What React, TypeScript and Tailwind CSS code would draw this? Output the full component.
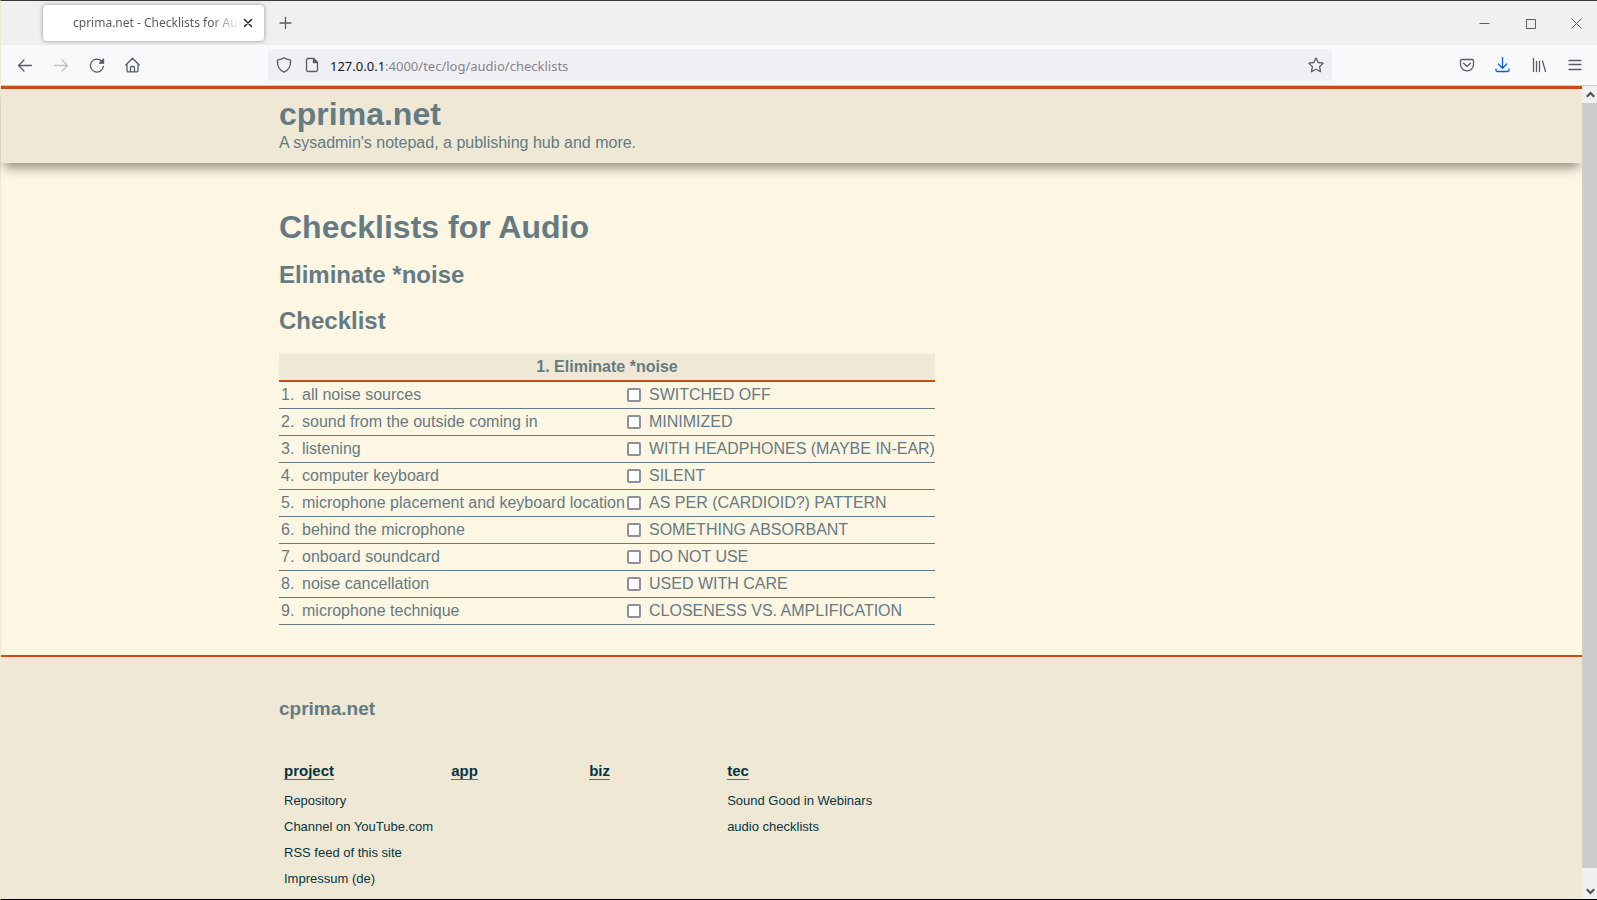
import type { ReactNode } from "react";

const checklist = [
  ["all noise sources", "SWITCHED OFF"],
  ["sound from the outside coming in", "MINIMIZED"],
  ["listening", "WITH HEADPHONES (MAYBE IN-EAR)"],
  ["computer keyboard", "SILENT"],
  ["microphone placement and keyboard location", "AS PER (CARDIOID?) PATTERN"],
  ["behind the microphone", "SOMETHING ABSORBANT"],
  ["onboard soundcard", "DO NOT USE"],
  ["noise cancellation", "USED WITH CARE"],
  ["microphone technique", "CLOSENESS VS. AMPLIFICATION"],
];

const siteMap = [
  {
    title: "project",
    links: ["Repository", "Channel on YouTube.com", "RSS feed of this site", "Impressum (de)"],
  },
  { title: "app", links: [] },
  { title: "biz", links: [] },
  { title: "tec", links: ["Sound Good in Webinars", "audio checklists"] },
];

function Icon({ children, className = "" }: { children: ReactNode; className?: string }) {
  return (
    <svg
      viewBox="0 0 16 16"
      className={`size-4 shrink-0 ${className}`}
      fill="none"
      stroke="currentColor"
      strokeWidth="1.3"
      strokeLinecap="round"
      strokeLinejoin="round"
      aria-hidden="true"
    >
      {children}
    </svg>
  );
}

function ToolButton({ label, children, className = "" }: { label: string; children: ReactNode; className?: string }) {
  return (
    <button
      type="button"
      aria-label={label}
      className={`flex h-8 w-9 shrink-0 items-center justify-center ${className}`}
    >
      {children}
    </button>
  );
}

function WindowButton({ label, children }: { label: string; children: ReactNode }) {
  return (
    <button type="button" aria-label={label} className="flex h-full w-[42px] items-center justify-center text-[#5c5c5c]">
      <svg viewBox="0 0 11 11" className="size-[11px]" fill="none" stroke="currentColor" aria-hidden="true">
        {children}
      </svg>
    </button>
  );
}

function TabStrip() {
  return (
    <div className="flex h-11 items-center bg-[#f0f0f0] pl-[42px] font-['Noto_Sans',sans-serif]">
      <div className="flex h-9 w-[221px] items-center rounded bg-white pr-2 pl-[30px] shadow-[0_0_4px_rgba(0,0,0,0.4)]">
        <span className="min-w-0 flex-1 overflow-hidden text-xs whitespace-nowrap text-[#5b5b66] [mask-image:linear-gradient(to_right,black_84%,transparent)]">
          cprima.net - Checklists for Audio
        </span>
        <button type="button" aria-label="Close tab" className="text-[#15141a]">
          <Icon>
            <path d="M4.500 4.500l7 7M11.500 4.500l-7 7" />
          </Icon>
        </button>
      </div>
      <button type="button" aria-label="New tab" className="ml-[14px] text-[#5b5b66]">
        <Icon>
          <path d="M7.500 2.500v11M2 8h11" />
        </Icon>
      </button>
      <div className="ml-auto flex h-full gap-1">
        <WindowButton label="Minimize">
          <path d="M0.500 5.500h10" />
        </WindowButton>
        <WindowButton label="Maximize">
          <path d="M1.500 1.500h9v9h-9z" />
        </WindowButton>
        <WindowButton label="Close">
          <path d="M0.500 0.500l10 10M10.500 0.500l-10 10" />
        </WindowButton>
      </div>
    </div>
  );
}

function Toolbar() {
  return (
    <div className="flex h-[41px] items-center border-b border-[#cccccc] bg-[#f9f9fb] pr-1 pl-[6px] text-[#5b5b66]">
      <ToolButton label="Back">
        <Icon>
          <path d="M14.500 8.500h-13M7 3L1.500 8.500L7 14" />
        </Icon>
      </ToolButton>
      <ToolButton label="Forward" className="text-[#c0c0c5]">
        <Icon>
          <path d="M1.500 8.500h13M9 3L14.500 8.500L9 14" />
        </Icon>
      </ToolButton>
      <ToolButton label="Reload">
        <Icon>
          <path d="M14.400 9.500A6.500 6.500 0 1 1 12.600 4" />
          <path d="M10.500 6.200h4V2.200z" fill="currentColor" />
        </Icon>
      </ToolButton>
      <ToolButton label="Home">
        <Icon>
          <path d="M0.800 8L7.500 1.200L14.200 8M2 7V13.500a1.300 1.300 0 0 0 1.300 1.300H11.700a1.300 1.300 0 0 0 1.300-1.300V7M5.500 14.500V10.500a1 1 0 0 1 1-1H8.500a1 1 0 0 1 1 1V14.500" />
        </Icon>
      </ToolButton>
      <div className="flex-1" />
      <div className="flex h-8 min-w-0 basis-[1064px] items-center rounded bg-[#f0f0f4] pr-2 pl-2">
        <Icon>
          <path d="M8 0.800C6.500 2 4 2.800 1.400 3.200C1.200 8.500 2.500 12.800 8 15.200C13.500 12.800 14.800 8.500 14.600 3.200C12 2.800 9.500 2 8 0.800z" />
        </Icon>
        <Icon className="ml-3">
          <path d="M9.500 1.500H4A1.500 1.500 0 0 0 2.500 3V13A1.500 1.500 0 0 0 4 14.500H12A1.500 1.500 0 0 0 13.500 13V5.500z" />
          <path d="M9.500 1.500V5.500H13.500z" fill="currentColor" />
        </Icon>
        <a
          href="#top"
          className="ml-[10px] truncate pt-[2px] font-['Noto_Sans',sans-serif] text-[13px]/5 text-[#85858e]"
        >
          <span className="text-[#15141a]">127.0.0.1</span>:4000/tec/log/audio/checklists
        </a>
        <button type="button" aria-label="Bookmark this page" className="ml-auto">
          <Icon>
            <path d="M8 1L10.200 5.500L15.200 6.100L11.600 9.600L12.500 14.700L8 12.300L3.500 14.700L4.400 9.600L0.800 6.100L5.800 5.500z" />
          </Icon>
        </button>
      </div>
      <div className="flex-1" />
      <ToolButton label="Save to Pocket">
        <Icon>
          <path d="M2.800 2.500H13.200A1.400 1.400 0 0 1 14.500 3.900V7.400A6.500 6.500 0 0 1 1.500 7.400V3.900A1.400 1.400 0 0 1 2.800 2.500zM4.600 6.300L8 9.500L11.400 6.300" />
        </Icon>
      </ToolButton>
      <ToolButton label="Downloads" className="text-[#0061e0]">
        <Icon>
          <path d="M7.500 0.500V11M3.300 7L7.500 11.200L11.700 7M1 12V13.200A1.300 1.300 0 0 0 2.300 14.500H12.700A1.300 1.300 0 0 0 14 13.200V12" />
        </Icon>
      </ToolButton>
      <ToolButton label="Library">
        <Icon>
          <path d="M2.500 1.500V14.500M5.500 4.500V14.500M8.500 4.500V14.500M11.500 4L14.500 14.500" />
        </Icon>
      </ToolButton>
      <ToolButton label="Open menu">
        <Icon>
          <path d="M2 3.500H14M2 7.500H14M2 12.500H14" />
        </Icon>
      </ToolButton>
    </div>
  );
}

function ChecklistTable() {
  return (
    <table className="mt-[3px] w-[656px] max-w-full border-separate border-spacing-0 text-base/[26px]">
      <thead>
        <tr>
          <th colSpan={3} className="border-b-2 border-[#cb4b16] bg-[#eee8d5] p-0 font-bold">
            1. Eliminate *noise
          </th>
        </tr>
      </thead>
      <tbody>
        {checklist.map(([item, state], i) => (
          <tr key={item}>
            <td className="w-[23px] border-b border-[#657b83] p-0 pl-[2px]">{i + 1}.</td>
            <td className="w-[325px] border-b border-[#657b83] p-0 whitespace-nowrap">
              <label htmlFor={`check-${i}`}>{item}</label>
            </td>
            <td className="border-b border-[#657b83] p-0 whitespace-nowrap">
              <label className="flex items-center gap-2">
                <input
                  id={`check-${i}`}
                  type="checkbox"
                  className="size-[14px] shrink-0 appearance-none rounded-[2px] border-2 border-[#8f8f9d] bg-white checked:bg-[#0061e0]"
                />
                {state}
              </label>
            </td>
          </tr>
        ))}
      </tbody>
    </table>
  );
}

function Scrollbar() {
  return (
    <div className="flex w-[15px] shrink-0 flex-col bg-[#f0f0f0] text-[#505050]" aria-hidden="true">
      <div className="flex h-[17px] items-center justify-center pl-[2px]">
        <svg viewBox="0 0 9 7" className="h-[7px] w-[9px]" fill="none" stroke="currentColor" strokeWidth="2.2">
          <path d="M0.800 5.800L4.500 2L8.200 5.800" />
        </svg>
      </div>
      <div className="flex-1 bg-[#cdcdcd]" />
      <div className="flex h-[31px] items-end justify-center pb-1 pl-[2px]">
        <svg viewBox="0 0 9 7" className="h-[7px] w-[9px]" fill="none" stroke="currentColor" strokeWidth="2.2">
          <path d="M0.800 1.200L4.500 5L8.200 1.200" />
        </svg>
      </div>
    </div>
  );
}

export default function App() {
  return (
    <div className="flex min-h-screen flex-col border-t border-b border-l border-t-[#38383d] border-b-black border-l-[#eee8d5] bg-[#fdf6e3]">
      <TabStrip />
      <Toolbar />
      <div className="flex flex-1">
        <div
          id="top"
          className="flex min-w-0 flex-1 flex-col font-['Liberation_Sans',Arial,sans-serif] text-[#657b83]"
        >
          <header className="border-t-[3px] border-[#cb4b16] bg-[#eee8d5] pt-[9px] pb-[7px] shadow-[0_8px_10px_-3px_rgba(0,0,0,0.4)]">
            <div className="mx-auto max-w-[1025px]">
              <div className="text-[32px]/8 font-bold">cprima.net</div>
              <p className="text-base/[26px]">A sysadmin's notepad, a publishing hub and more.</p>
            </div>
          </header>
          <main className="mx-auto flex w-full max-w-[1025px] flex-col gap-[14px] pt-[46px] pb-[30px]">
            <h1 className="text-[32px]/9 font-bold">Checklists for Audio</h1>
            <h2 className="text-2xl/8 font-bold">Eliminate *noise</h2>
            <h2 className="text-2xl/8 font-bold">Checklist</h2>
            <ChecklistTable />
          </main>
          <footer className="flex-1 border-t-2 border-[#cb4b16] bg-[#eee8d5] pt-[38px]">
            <div className="mx-auto max-w-[1025px]">
              <h3 className="text-[19px]/7 font-bold">cprima.net</h3>
              <nav className="mt-[38px] flex gap-[18px] pl-[5px] text-[#073642]">
                {siteMap.map((group) => (
                  <section key={group.title} className="min-w-[120px]">
                    <h4 className="text-[15px]/5 font-bold">
                      <a href={`#${group.title}`} className="border-b border-[#cb4b16]">
                        {group.title}
                      </a>
                    </h4>
                    <ul className="mt-[7px] text-[13px]/[26px]">
                      {group.links.map((link) => (
                        <li key={link}>
                          <a href="#top">{link}</a>
                        </li>
                      ))}
                    </ul>
                  </section>
                ))}
              </nav>
            </div>
          </footer>
        </div>
        <Scrollbar />
      </div>
    </div>
  );
}
